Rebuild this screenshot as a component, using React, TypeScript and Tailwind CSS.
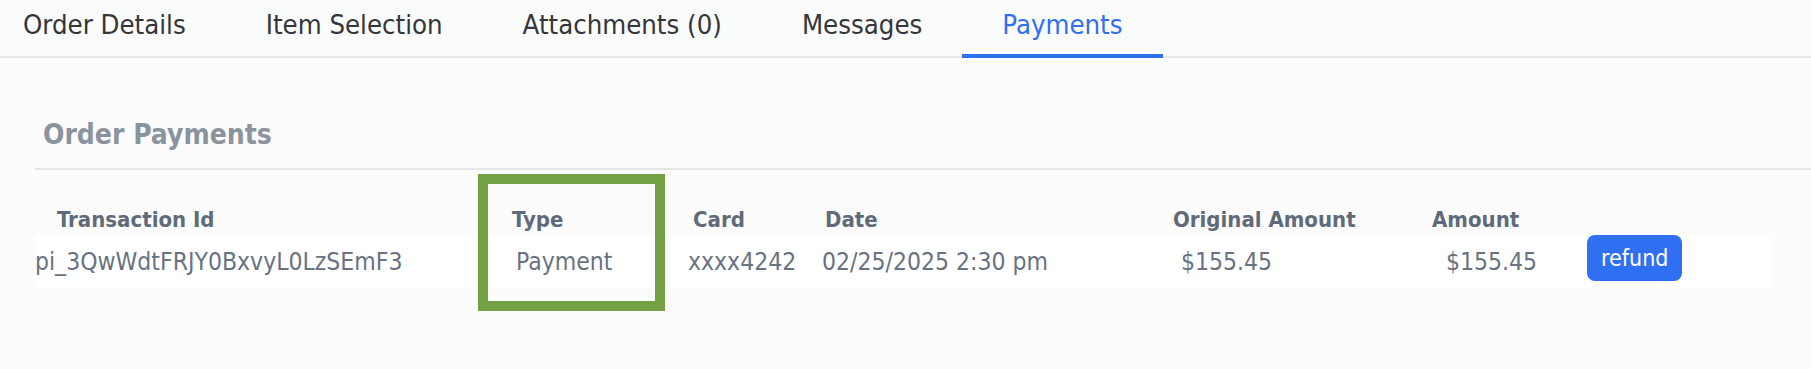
const tabs = ['Order Details', 'Item Selection', 'Attachments (0)', 'Messages', 'Payments'];

const payments = [
  {
    id: 'pi_3QwWdtFRJY0BxvyL0LzSEmF3',
    type: 'Payment',
    card: 'xxxx4242',
    date: '02/25/2025 2:30 pm',
    original: '$155.45',
    amount: '$155.45',
  },
];

export default function App() {
  const active = 'Payments';

  return (
    <div className="relative min-h-screen bg-[#fcfcfc] font-['DejaVu_Sans_Condensed','DejaVu_Sans',sans-serif] font-stretch-condensed">
      {/* tabs */}
      <div className="bg-[#fafbfb] border-b-2 border-[#e6e6e6]">
        <div className="flex -ml-[17px]">
          {tabs.map(t =>
            t === active ? (
              <div key={t} className="h-[58px] -mb-[2px] px-10 pb-[3px] flex items-center border-b-4 border-[#2f6ff0] text-[27.3px] text-[#2f6ff0]">
                {t}
              </div>
            ) : (
              <div key={t} className="h-[56px] px-10 pb-[5px] flex items-center text-[27.3px] text-[#35353a]">
                {t}
              </div>
            )
          )}
        </div>
      </div>

      {/* order payments */}
      <div className="ml-[35px] mt-[61px]">
        <h2 className="pl-2 text-[28px] leading-[32px] font-bold text-[#8b949e]">Order Payments</h2>
        <div className="mt-[17px] h-[2px] bg-[#e6e6e6]" />

        <div className="mt-[37px]">
          <div className="flex text-[22px] leading-[26px] font-bold text-[#5f6b7a]">
            <div className="w-[443px] pl-[22px]">Transaction Id</div>
            <div className="w-[187px] pl-[34px]">Type</div>
            <div className="w-[145px] pl-[28px]">Card</div>
            <div className="w-[340px] pl-[15px]">Date</div>
            <div className="w-[270px] pl-[23px]">Original Amount</div>
            <div className="w-[150px] pl-[12px]">Amount</div>
          </div>

          {payments.map(p => (
            <div key={p.id} className="mt-[2px] flex items-start h-[53px] w-[1735px] bg-white text-[24.5px] leading-[30px] text-[#687282]">
              <div className="w-[443px] pt-3">{p.id}</div>
              <div className="w-[187px] pt-3 pl-[38px]">{p.type}</div>
              <div className="w-[145px] pt-3 pl-[23px]">{p.card}</div>
              <div className="w-[340px] pt-3 pl-[12px]">{p.date}</div>
              <div className="w-[270px] pt-3 pl-[31px]">{p.original}</div>
              <div className="w-[150px] pt-3 pl-[26px]">{p.amount}</div>
              <div className="pl-[17px]">
                <button className="h-[46px] px-[14px] rounded-lg bg-[#2f6ff1] text-white text-[23px] leading-none">
                  refund
                </button>
              </div>
            </div>
          ))}
        </div>
      </div>

      {/* highlight box */}
      <div className="absolute left-[478px] top-[174px] w-[187px] h-[137px] border-[10px] border-[#73a043]" />
    </div>
  );
}
